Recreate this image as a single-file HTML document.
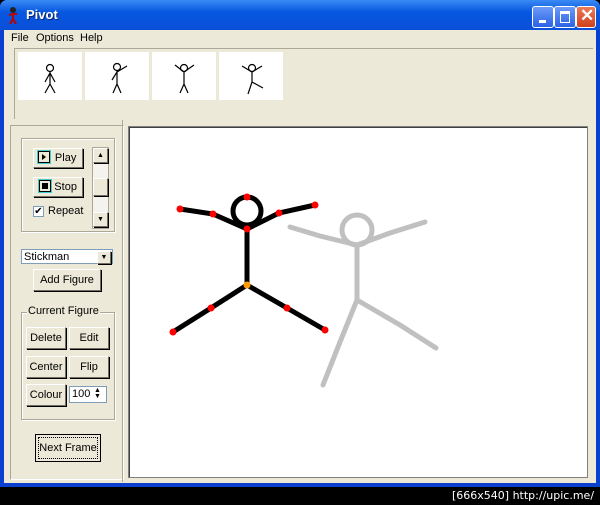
<!DOCTYPE html>
<html><head><style>
html,body{margin:0;width:600px;height:505px;overflow:hidden}
body{background:#000;position:relative;font-family:Tahoma,"Liberation Sans",sans-serif;font-size:11px}
.a{position:absolute}
.win{left:0;top:0;width:600px;height:487px;background:#0a3fd0;border-radius:7px 7px 0 0}
.title{left:0;top:0;width:600px;height:30px;background:linear-gradient(#3a8af5,#0757e0 40%,#0a4fd8);border-radius:7px 7px 0 0}
.body{left:4px;top:30px;width:592px;height:453px;background:#ece9d8}
.btn{position:absolute;background:#ece9d8;border:1px solid;border-color:#fff #716f64 #716f64 #fff;box-shadow:1px 1px 0 #000;text-align:center;color:#000;white-space:nowrap}
.grp{position:absolute;border:1px solid #aca899;box-shadow:1px 1px 0 #fff inset,1px 1px 0 #fff}
.thumb{position:absolute;top:52px;width:64px;height:48px;background:#fff}
.tb{width:20px;height:20px;border-radius:3px;position:absolute;top:6px;border:1px solid #fff}
</style></head><body>
<div class="a win"></div>
<div class="a title"></div>
<svg class="a" style="left:6px;top:6px" width="14" height="18"><circle cx="7" cy="4" r="3" fill="#222"/><path d="M7 7v6M3 9l4-1 4 0M7 13l-3 5M7 13l3 5" stroke="#b00" stroke-width="2"/></svg>
<div class="a" style="left:26px;top:7px;color:#fff;font-weight:bold;font-size:13px;text-shadow:1px 1px #0a246a">Pivot</div>
<div class="tb" style="left:532px;background:linear-gradient(#6b9af7,#2a62e6)"><div class="a" style="left:6px;top:13px;width:7px;height:3px;background:#fff"></div></div>
<div class="tb" style="left:554px;background:linear-gradient(#6b9af7,#2a62e6)"><div class="a" style="left:5px;top:4px;width:8px;height:8px;border:1px solid #fff;border-top-width:3px"></div></div>
<div class="tb" style="left:576px;background:linear-gradient(#ec7a5a,#d0401c);width:18px"><div class="a" style="left:3px;top:-1px;color:#fff;font-size:17px;font-weight:bold">✕</div></div>
<div class="a body"></div>
<div class="a" style="left:11px;top:32px">File</div>
<div class="a" style="left:36px;top:32px">Options</div>
<div class="a" style="left:80px;top:32px">Help</div>
<div class="a" style="left:14px;top:48px;width:578px;height:70px;border-left:1px solid #aca899;border-top:1px solid #aca899"></div>
<div class="thumb" style="left:18px"></div><div class="thumb" style="left:85px"></div><div class="thumb" style="left:152px"></div><div class="thumb" style="left:219px"></div>
<svg class="a" style="left:0;top:0" width="300" height="110" stroke="#000" fill="none" stroke-width="1.2">
<circle cx="50" cy="68" r="3.5"/><path d="M50 72v12l-5 9M50 84l5 9M45 82l5-9 5 9"/>
<circle cx="117" cy="67" r="3.5"/><path d="M117 71v13l-4 9M117 84l4 9M112 80l5-8 10-6"/>
<circle cx="184" cy="68" r="3.5"/><path d="M184 72v12l-4 9M184 84l4 9M175 65l9 7 10-7"/>
<circle cx="252" cy="68" r="3.5"/><path d="M252 72v10l-4 12M252 82l11 6M242 66l10 6 10-6"/>
</svg>
<div class="a" style="left:10px;top:125px;width:112px;height:353px;border:1px solid #aca899;border-right-color:#fff;border-bottom-color:#fff"></div>
<div class="grp" style="left:21px;top:138px;width:92px;height:92px"></div>
<div class="btn" style="left:33px;top:148px;width:48px;height:18px;line-height:18px">&nbsp;&nbsp;&nbsp;&nbsp;&nbsp;Play</div>
<div class="a" style="left:38px;top:151px;width:10px;height:10px;border:1px solid #000;box-shadow:0 0 0 1px #4cc"></div><div class="a" style="left:42px;top:154px;border-left:4px solid #000;border-top:3px solid transparent;border-bottom:3px solid transparent"></div>
<div class="btn" style="left:33px;top:177px;width:48px;height:18px;line-height:18px">&nbsp;&nbsp;&nbsp;&nbsp;&nbsp;Stop</div>
<div class="a" style="left:39px;top:180px;width:10px;height:10px;border:1px solid #000;box-shadow:0 0 0 1px #4cc"></div><div class="a" style="left:42px;top:183px;width:6px;height:6px;background:#000"></div>
<div class="a" style="left:33px;top:206px;width:9px;height:9px;border:1px solid #7f9db9;background:#fff;font-size:10px;line-height:9px;text-align:center">✔</div>
<div class="a" style="left:48px;top:205px">Repeat</div>
<div class="a" style="left:92px;top:147px;width:15px;height:80px;background:#f4f3ee;border:1px solid #aca899"></div>
<div class="btn" style="left:93px;top:148px;width:13px;height:13px;font-size:7px;line-height:13px">▲</div>
<div class="btn" style="left:93px;top:178px;width:13px;height:16px"></div>
<div class="btn" style="left:93px;top:212px;width:13px;height:13px;font-size:7px;line-height:13px">▼</div>
<div class="a" style="left:21px;top:249px;height:15px;background:#fff;border:1px solid #7f9db9;line-height:15px;padding-left:2px;box-sizing:border-box;width:92px">Stickman</div>
<div class="btn" style="left:97px;top:251px;width:12px;height:11px;font-size:7px;line-height:11px">▼</div>
<div class="btn" style="left:33px;top:269px;width:66px;height:20px;line-height:20px">Add Figure</div>
<div class="grp" style="left:21px;top:312px;width:92px;height:106px"></div>
<div class="a" style="left:27px;top:305px;background:#ece9d8;padding:0 1px">Current Figure</div>
<div class="btn" style="left:26px;top:327px;width:38px;height:20px;line-height:20px">Delete</div>
<div class="btn" style="left:69px;top:327px;width:38px;height:20px;line-height:20px">Edit</div>
<div class="btn" style="left:26px;top:356px;width:38px;height:20px;line-height:20px">Center</div>
<div class="btn" style="left:69px;top:356px;width:38px;height:20px;line-height:20px">Flip</div>
<div class="btn" style="left:26px;top:384px;width:38px;height:20px;line-height:20px">Colour</div>
<div class="a" style="left:69px;top:386px;width:38px;height:17px;background:#fff;border:1px solid #7f9db9;box-sizing:border-box;padding-left:2px;line-height:15px">100</div>
<div class="a" style="left:94px;top:388px;font-size:7px;line-height:6px">▲<br>▼</div>
<div class="btn" style="left:35px;top:434px;width:64px;height:26px;line-height:26px;border:1px solid #000;box-shadow:none;outline:1px dotted #000;outline-offset:-4px">Next Frame</div>
<div class="a" style="left:122px;top:120px;width:472px;height:362px;border-left:1px solid #aca899"></div>
<div class="a" style="left:128px;top:126px;width:460px;height:352px;background:#fff;border:1px solid #808080;box-sizing:border-box;box-shadow:inset 1px 1px 0 #404040"></div>
<svg class="a" style="left:0;top:0" width="600" height="487" fill="none" stroke-linecap="round">
<g stroke="#c0c0c0" stroke-width="5">
<circle cx="357" cy="230" r="15"/>
<path d="M357 245v55l-17 42-17 43M357 300l43 25 36 23M357 245l-37-9-30-9M357 245l33-12 35-11"/>
</g>
<g stroke="#000" stroke-width="5">
<circle cx="247" cy="211" r="14"/>
<path d="M247 229v56l-36 23-38 24M247 285l40 23 38 22M247 229l-34-15-33-5M247 229l32-16 36-8"/>
</g>
<g fill="#f00" stroke="none">
<circle cx="247" cy="197" r="3.5"/><circle cx="247" cy="229" r="3.5"/><circle cx="213" cy="214" r="3.5"/><circle cx="180" cy="209" r="3.5"/><circle cx="279" cy="213" r="3.5"/><circle cx="315" cy="205" r="3.5"/><circle cx="211" cy="308" r="3.5"/><circle cx="173" cy="332" r="3.5"/><circle cx="287" cy="308" r="3.5"/><circle cx="325" cy="330" r="3.5"/>
<circle cx="247" cy="285" r="3.5" fill="#f90"/></g>
</svg>
<div class="a" style="left:452px;top:489px;color:#fff;font-size:11px;white-space:nowrap;font-family:'DejaVu Sans',sans-serif">[666x540] http://upic.me/</div>
</body></html>
